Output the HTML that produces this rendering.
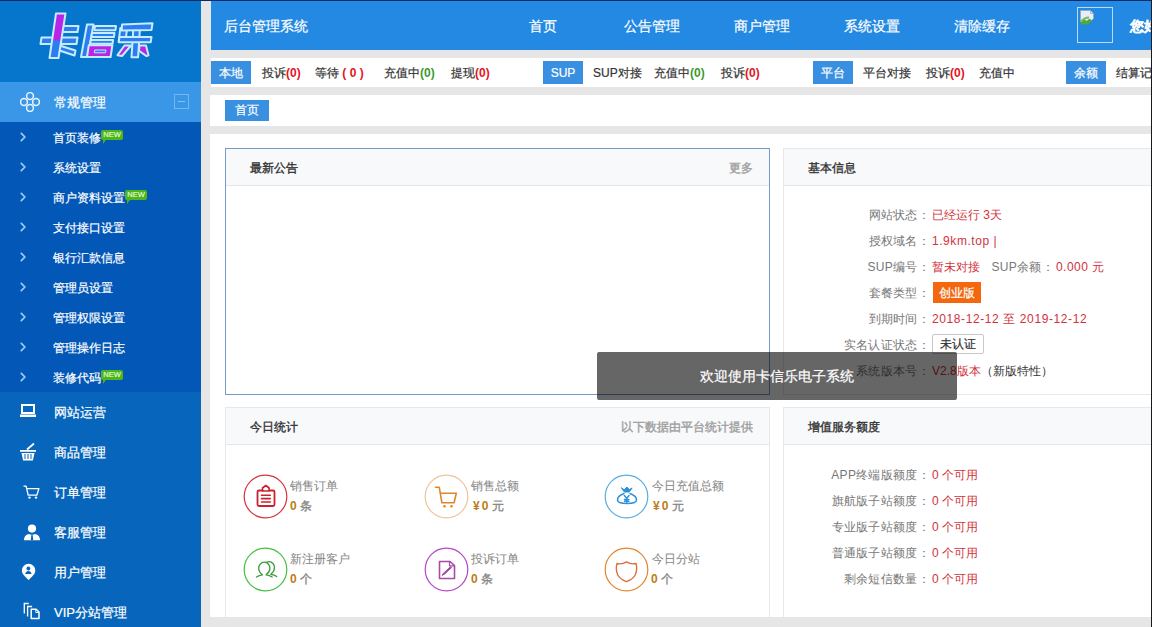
<!DOCTYPE html>
<html><head><meta charset="utf-8">
<style>
*{box-sizing:border-box;margin:0;padding:0;white-space:nowrap}
html,body{-webkit-text-stroke-width:0.2px;width:1152px;height:627px;overflow:hidden;background:#e6e6e6;font-family:"Liberation Sans",sans-serif;}
.a{position:absolute;white-space:nowrap}
#side{position:absolute;left:0;top:0;width:201px;height:627px;background:#0766bb}
#logo{position:absolute;left:0;top:0;width:201px;height:82px;background:#0675cc}
#act{position:absolute;left:0;top:82px;width:201px;height:40px;background:#3a97e8}
#sub{position:absolute;left:0;top:122px;width:201px;height:270px;background:#0357b7}
.mi{position:absolute;left:54px;color:#fff;font-size:13px;line-height:42px;height:40px}
.si{position:absolute;left:53px;color:#fff;font-size:12px;line-height:32px;height:30px}
.arr{position:absolute;left:20px;width:7px;height:30px}
.new{position:absolute;width:22px;height:10px;background:#4cb61a;color:#f4ffe0;font-size:7.5px;line-height:10px;text-align:center;border-radius:2px;-webkit-text-stroke-width:0.1px}
.new:after{content:"";position:absolute;left:2px;bottom:-4px;border-left:3px solid #4db219;border-right:3px solid transparent;border-bottom:4px solid transparent}
#hdr{position:absolute;left:211px;top:1px;width:940px;height:49px;background:#2489e3}
.nav{position:absolute;top:1px;height:49px;line-height:50px;width:110px;text-align:center;color:#fff;font-size:14px}
#tabs{position:absolute;left:211px;top:58px;width:940px;height:29px;background:#fff}
.lbl{position:absolute;top:61px;height:23px;width:40px;background:#3a90e0;color:#fff;font-size:12px;line-height:25px;text-align:center}
.ti{position:absolute;top:61px;height:23px;line-height:25px;font-size:12px;color:#333}
.r{color:#e5141d;font-weight:bold;-webkit-text-stroke-width:0}
.g{color:#3c9a2d;font-weight:bold;-webkit-text-stroke-width:0}
#crumb{position:absolute;left:210px;top:95px;width:941px;height:31px;background:#fff}
#main{position:absolute;left:210px;top:134px;width:941px;height:483px;background:#fff}
.card{position:absolute;border:1px solid #e8e8e8;background:#fff}
.ch{position:absolute;left:0;top:0;right:0;height:37px;background:#f8f9fb;border-bottom:1px solid #e6e6e6}
.ct{position:absolute;left:24px;top:0;line-height:39px;font-size:12px;color:#333;-webkit-text-stroke-width:0.35px}
.cm{position:absolute;right:16px;top:0;line-height:39px;font-size:12px;color:#a0a0a0;-webkit-text-stroke-width:0.4px}
.lab{position:absolute;width:199px;text-align:right;font-size:12px;color:#777;line-height:28px;height:26px;letter-spacing:0.3px;-webkit-text-stroke-width:0}
.val{position:absolute;font-size:12px;color:#d2323c;line-height:28px;height:26px;-webkit-text-stroke-width:0}
.circ{position:absolute;width:44px;height:44px;border-radius:50%;border:1px solid}
.st{position:absolute;font-size:12px;color:#888;line-height:16px;-webkit-text-stroke-width:0.05px}
.sv{position:absolute;font-size:12px;color:#888;line-height:16px;-webkit-text-stroke-width:0.35px}
.sv b{color:#bd7b20;font-weight:bold;-webkit-text-stroke-width:0}
#toast{position:absolute;left:597px;top:352px;width:360px;height:48px;background:rgba(0,0,0,0.6);border-radius:2px;color:#fff;font-size:14px;line-height:48px;text-align:center}
</style></head><body>
<div id="side">
 <div id="logo">
  <svg class="a" style="left:0;top:0" width="201" height="82" viewBox="0 0 201 82">
   <defs>
    <linearGradient id="kg" gradientUnits="userSpaceOnUse" x1="0" y1="13" x2="0" y2="58"><stop offset="0.6" stop-color="#b824e8"/><stop offset="0.62" stop-color="#2c7ef0"/></linearGradient>
    <g id="L">
    <path d="M60 26h18.5l-1 6H59z"/>
    <path d="M41.5 37.5h36l-1 6.5h-36z"/>
    <path d="M59.5 45.5l16 5-1 5-16.5-5.5z"/>
    <path d="M56 13.5h9.5l-7 44.5h-9z" fill="url(#kg)"/>
    <path d="M87 24.5h6.5l-6 32.5H81z"/>
    <path d="M95 26h21l-.6 4.2h-21z"/>
    <path d="M92 33h22.5l-.6 4h-22.5z"/>
    <path d="M90.8 40h22.3l-.6 3.8H90.2z"/>
    <path d="M88.8 45.2h23.6l-1.8 11.8H87z" fill="#b824e8"/>
    <path d="M120.3 28h6.8l-1.6 13.5h-6.8z"/>
    <path d="M133.3 29h6.6l-1.8 28.3h-6.6z"/>
    <path d="M122 24.5l30.5-1.2-1 6.6-29.8.6z"/>
    <path d="M119.5 37h32l-.8 5.2h-32z"/>
    <path d="M124.5 45.5h6.5l-9 10.5-4.5-.8z" fill="#b824e8"/>
    <path d="M139.5 45.5h6.5l2.5 9.8-2 .8-7.5-5.3z" fill="#b824e8"/>
    </g>
   </defs>
   <use href="#L" fill="#2c7ef0" stroke="#c6ecff" stroke-width="2" stroke-linejoin="round"/>
   <path d="M94.8 50h11.2l-.5 2.8H94.3z" fill="#2c7ef0" stroke="#c6ecff" stroke-width="1"/>
  </svg>
 </div>
 <div id="act">
  <svg class="a" style="left:20px;top:10px" width="20" height="20" viewBox="0 0 20 20" fill="none" stroke="#eaf4ff" stroke-width="1.5">
   <circle cx="10" cy="4" r="3.4"/><circle cx="10" cy="16" r="3.4"/><circle cx="4" cy="10" r="3.4"/><circle cx="16" cy="10" r="3.4"/>
  </svg>
  <div class="mi" style="top:0">常规管理</div>
  <div class="a" style="left:174px;top:12px;width:15px;height:15px;border:1px solid rgba(255,255,255,0.3)"><div class="a" style="left:3px;top:6px;width:7px;height:1px;background:rgba(255,255,255,0.4)"></div></div>
 </div>
 <div id="sub">
  <svg class="a" style="left:0;top:0" width="30" height="270" fill="none" stroke="#9dcbf3" stroke-width="1.7" stroke-linecap="round" stroke-linejoin="round"><path d="M21.3 11.3l3.6 3.7-3.6 3.7M21.3 41.3l3.6 3.7-3.6 3.7M21.3 71.3l3.6 3.7-3.6 3.7M21.3 101.3l3.6 3.7-3.6 3.7M21.3 131.3l3.6 3.7-3.6 3.7M21.3 161.3l3.6 3.7-3.6 3.7M21.3 191.3l3.6 3.7-3.6 3.7M21.3 221.3l3.6 3.7-3.6 3.7M21.3 251.3l3.6 3.7-3.6 3.7"/>
  </svg>
  <div class="si" style="top:0">首页装修</div><div class="new" style="left:101px;top:8px">NEW</div>
  <div class="si" style="top:30px">系统设置</div>
  <div class="si" style="top:60px">商户资料设置</div><div class="new" style="left:125px;top:68px">NEW</div>
  <div class="si" style="top:90px">支付接口设置</div>
  <div class="si" style="top:120px">银行汇款信息</div>
  <div class="si" style="top:150px">管理员设置</div>
  <div class="si" style="top:180px">管理权限设置</div>
  <div class="si" style="top:210px">管理操作日志</div>
  <div class="si" style="top:240px">装修代码</div><div class="new" style="left:101px;top:248px">NEW</div>
 </div>
 <div class="mi" style="top:392px">网站运营</div>
 <div class="mi" style="top:432px">商品管理</div>
 <div class="mi" style="top:472px">订单管理</div>
 <div class="mi" style="top:512px">客服管理</div>
 <div class="mi" style="top:552px">用户管理</div>
 <div class="mi" style="top:592px">VIP分站管理</div>
 <svg class="a" style="left:0;top:392px" width="50" height="240" fill="#fff">
  <!-- laptop -->
  <path d="M22 13h12v8H22z" fill="none" stroke="#fff" stroke-width="2"/>
  <path d="M20 22.5h16v2.5H20z"/>
  <!-- basket -->
  <path d="M20 58h16v1.8H20z"/>
  <path d="M21.5 61h13l-1.6 7.5h-9.8z"/>
  <path d="M27 57.5l7-6" stroke="#fff" stroke-width="1.8"/>
  <path d="M25 62v5M28 62v5M31 62v5" stroke="#0766bb" stroke-width="1"/>
  <!-- cart -->
  <path d="M23.5 94.2h2.6l2.1 9h8.6l2.1-6.6H26.9" fill="none" stroke="#fff" stroke-width="1.3" stroke-linejoin="round"/>
  <circle cx="29.5" cy="105.6" r="1.2"/><circle cx="36" cy="105.6" r="1.2"/>
  <!-- person -->
  <circle cx="32" cy="136.6" r="4.1"/>
  <path d="M23.8 148.3c0.3-3.5 1.8-5.8 5-6.3l3.2 1 3.2-1c3.2 0.5 4.7 2.8 5 6.3z"/>
  <path d="M31.3 143.2h1.4l0.5 4.6-1.2 0.6-1.2-0.6z" fill="#0766bb"/>
  <!-- user pin -->
  <path d="M28.6 171.8a6.7 6.7 0 0 1 6.7 6.7c0 3.8-3.8 6.5-6.7 9.6-2.9-3.1-6.7-5.8-6.7-9.6a6.7 6.7 0 0 1 6.7-6.7z"/>
  <circle cx="28.4" cy="176.5" r="1.9" fill="#0766bb"/>
  <path d="M25.2 182c0.4-2 1.6-3 3.2-3s2.8 1 3.2 3z" fill="#0766bb"/>
  <!-- vip copy -->
  <path d="M24.3 221.5v-10h4.5" fill="none" stroke="#fff" stroke-width="1.3"/>
  <path d="M27.6 224.5v-10h4.5" fill="none" stroke="#fff" stroke-width="1.3"/>
  <path d="M31.2 217.2h5l2.8 2.8v6.5h-7.8z" fill="none" stroke="#fff" stroke-width="1.5" stroke-linejoin="round"/>
  <path d="M35.8 217.5v3h3" fill="none" stroke="#fff" stroke-width="1"/>
 </svg>

</div>
<div class="a" style="left:0;top:0;width:1152px;height:1px;background:#0b2a66"></div>
<div id="hdr"></div>
<div class="a" style="left:224px;top:1px;line-height:50px;color:#fff;font-size:14px">后台管理系统</div>
<div class="nav" style="left:488px">首页</div>
<div class="nav" style="left:597px">公告管理</div>
<div class="nav" style="left:707px">商户管理</div>
<div class="nav" style="left:817px">系统设置</div>
<div class="nav" style="left:927px">清除缓存</div>
<div class="a" style="left:1077px;top:7px;width:36px;height:36px;border:1px solid #b9dbf8"></div>
<svg class="a" style="left:1079px;top:9px" width="18" height="18" viewBox="0 0 18 18">
 <path d="M1.5 1.5h10l3 3v5l-2 2-2-1.5-3 2-3-1.5-3 2z" fill="#e8eef6" stroke="#9aa6b8" stroke-width="0.8"/>
 <path d="M11.5 1.5v3h3" fill="none" stroke="#9aa6b8" stroke-width="0.8"/>
 <path d="M2 12.5l3-1.8 3 1.6 3-2 2 1.5 2-2v0.5L9 15.5H2z" fill="#4fa83a"/>
 <path d="M2 13c2-3 5-4.5 8-4.5" fill="none" stroke="#6cbf50" stroke-width="2"/>
</svg>
<div class="a" style="left:1130px;top:1px;line-height:50px;color:#fff;font-size:14px;font-weight:bold">您好</div>

<div id="tabs"></div>
<div class="lbl" style="left:211px">本地</div>
<div class="ti" style="left:262px">投诉<span class="r">(0)</span></div>
<div class="ti" style="left:315px">等待 <span class="r">( 0 )</span></div>
<div class="ti" style="left:384px">充值中<span class="g">(0)</span></div>
<div class="ti" style="left:451px">提现<span class="r">(0)</span></div>
<div class="lbl" style="left:543px">SUP</div>
<div class="ti" style="left:593px">SUP对接</div>
<div class="ti" style="left:654px">充值中<span class="g">(0)</span></div>
<div class="ti" style="left:721px">投诉<span class="r">(0)</span></div>
<div class="lbl" style="left:813px">平台</div>
<div class="ti" style="left:863px">平台对接</div>
<div class="ti" style="left:926px">投诉<span class="r">(0)</span></div>
<div class="ti" style="left:979px">充值中</div>
<div class="lbl" style="left:1066px">余额</div>
<div class="ti" style="left:1116px">结算记录</div>

<div id="crumb"></div>
<div class="a" style="left:225px;top:100px;width:44px;height:21px;background:#3a90e0;color:#fff;font-size:12px;line-height:21px;text-align:center">首页</div>

<div id="main"></div>
<div class="card" style="left:225px;top:148px;width:545px;height:247px;border-color:#7699cc">
 <div class="ch"><div class="ct">最新公告</div><div class="cm">更多</div></div>
</div>
<div class="card" style="left:783px;top:148px;width:400px;height:247px">
 <div class="ch"><div class="ct">基本信息</div></div>
</div>
<div class="lab" style="left:731px;top:201px">网站状态：</div><div class="val" style="left:932px;top:201px">已经运行 3天</div>
<div class="lab" style="left:731px;top:227px">授权域名：</div><div class="val" style="left:932px;top:227px;letter-spacing:0.55px">1.9km.top |</div>
<div class="lab" style="left:731px;top:253px">SUP编号：</div><div class="val" style="left:932px;top:253px">暂未对接</div>
<div class="lab" style="left:855px;top:253px">SUP余额：</div><div class="val" style="left:1056px;top:253px;letter-spacing:0.45px">0.000 元</div>
<div class="lab" style="left:731px;top:279px">套餐类型：</div>
<div class="a" style="left:933px;top:282px;width:48px;height:21px;background:#f4670e;color:#fff;font-size:12px;line-height:23px;text-align:center">创业版</div>
<div class="lab" style="left:731px;top:305px">到期时间：</div><div class="val" style="left:932px;top:305px;letter-spacing:0.6px">2018-12-12 至 2019-12-12</div>
<div class="lab" style="left:731px;top:331px">实名认证状态：</div>
<div class="a" style="left:932px;top:334px;width:52px;height:20px;border:1px solid #c8c8c8;border-radius:2px;background:#fff;color:#333;font-size:12px;line-height:18px;text-align:center">未认证</div>
<div class="lab" style="left:731px;top:357px">系统版本号：</div><div class="val" style="left:932px;top:357px">V2.8版本<span style="color:#333">（新版特性）</span></div>

<div class="card" style="left:225px;top:407px;width:545px;height:230px">
 <div class="ch"><div class="ct">今日统计</div><div class="cm">以下数据由平台统计提供</div></div>
</div>
<div class="card" style="left:783px;top:407px;width:400px;height:230px">
 <div class="ch"><div class="ct">增值服务额度</div></div>
</div>
<div class="lab" style="left:731px;top:461px">APP终端版额度：</div><div class="val" style="left:932px;top:461px">0 个可用</div>
<div class="lab" style="left:731px;top:487px">旗航版子站额度：</div><div class="val" style="left:932px;top:487px">0 个可用</div>
<div class="lab" style="left:731px;top:513px">专业版子站额度：</div><div class="val" style="left:932px;top:513px">0 个可用</div>
<div class="lab" style="left:731px;top:539px">普通版子站额度：</div><div class="val" style="left:932px;top:539px">0 个可用</div>
<div class="lab" style="left:731px;top:565px">剩余短信数量：</div><div class="val" style="left:932px;top:565px">0 个可用</div>

<div class="st" style="left:290px;top:478px">销售订单</div><div class="sv" style="left:290px;top:498px"><b>0</b> 条</div>
<div class="st" style="left:471px;top:478px">销售总额</div><div class="sv" style="left:473px;top:498px"><b>¥<span style="margin-left:2px">0</span></b> 元</div>
<div class="st" style="left:652px;top:478px">今日充值总额</div><div class="sv" style="left:653px;top:498px"><b>¥<span style="margin-left:2px">0</span></b> 元</div>
<div class="st" style="left:290px;top:551px">新注册客户</div><div class="sv" style="left:290px;top:571px"><b>0</b> 个</div>
<div class="st" style="left:471px;top:551px">投诉订单</div><div class="sv" style="left:471px;top:571px"><b>0</b> 条</div>
<div class="st" style="left:652px;top:551px">今日分站</div><div class="sv" style="left:651px;top:571px"><b>0</b> 个</div>


<svg class="a" style="left:243px;top:474px" width="46" height="46" fill="none" stroke-linecap="round" stroke-linejoin="round">
 <circle cx="22.5" cy="22.5" r="21.3" stroke="#d4343c" stroke-width="1.2"/>
 <path d="M19.5 16.5h-3.5a1.5 1.5 0 0 0-1.5 1.5v12.5a1.5 1.5 0 0 0 1.5 1.5h14a1.5 1.5 0 0 0 1.5-1.5V18a1.5 1.5 0 0 0-1.5-1.5h-3.5" stroke="#c9222c" stroke-width="1.8"/>
 <path d="M19.5 17v-3l3.3-2.5 3.3 2.5v3z" stroke="#c9222c" stroke-width="1.6"/>
 <path d="M18.5 21.3h8.8M18.5 24.6h8.8M18.5 28h8.8" stroke="#c9222c" stroke-width="1.6"/>
</svg>
<svg class="a" style="left:424px;top:474px" width="46" height="46" fill="none" stroke-linecap="round" stroke-linejoin="round">
 <circle cx="22.5" cy="22.5" r="21.3" stroke="#efc39c" stroke-width="1.2"/>
 <path d="M11.5 13.3h3.8l2.6 15.5h12.2l2.2-9.6H17" stroke="#e0862a" stroke-width="1.6"/>
 <circle cx="20.5" cy="32.2" r="1.3" fill="#e0862a"/><circle cx="27.5" cy="32.2" r="1.3" fill="#e0862a"/>
</svg>
<svg class="a" style="left:604px;top:474px" width="46" height="46" fill="none" stroke-linecap="round" stroke-linejoin="round">
 <circle cx="22.5" cy="22.5" r="21.3" stroke="#5aaee0" stroke-width="1.2"/>
 <path d="M17.5 14l2.8 4h5l2.8-4-2.8 1.6-2.4-2.6-2.4 2.6z" fill="#2a90dc" stroke="#2a90dc" stroke-width="1"/>
 <path d="M20 19.5c-4 1.5-6.5 4-6.5 6.5 0 2.5 3 3.5 9.5 3.5s9.5-1 9.5-3.5c0-2.5-2.5-5-6.5-6.5" stroke="#2a8ed8" stroke-width="1.5"/>
 <path d="M20.3 21.5l2.4 2.8 2.4-2.8M22.7 24.3v4M20.5 25.5h4.4M20.5 27.2h4.4" stroke="#2a90dc" stroke-width="1.4"/>
</svg>
<svg class="a" style="left:243px;top:547px" width="46" height="46" fill="none" stroke-linecap="round" stroke-linejoin="round">
 <circle cx="22.5" cy="22.5" r="21.3" stroke="#45c045" stroke-width="1.2"/>
 <path d="M13.5 30c2-1.5 4-2 6-2.2-2-1.6-3.8-3.6-3.8-6.6 0-3.3 2.5-6 5.6-6s5.6 2.7 5.6 6c0 3-1.8 5-3.8 6.6 2 .2 4 .7 6 2.2" stroke="#3c9c3c" stroke-width="1.3"/>
 <path d="M23.5 15.3c.8-.4 1.7-.6 2.6-.6 3.1 0 5.4 2.7 5.4 6 0 3-1.8 5-3.6 6.6 2 .2 4 .8 5.8 2.3" stroke="#3c9c3c" stroke-width="1.3"/>
</svg>
<svg class="a" style="left:424px;top:547px" width="46" height="46" fill="none" stroke-linecap="round" stroke-linejoin="round">
 <circle cx="22.5" cy="22.5" r="21.3" stroke="#b447c8" stroke-width="1.2"/>
 <path d="M15.5 14.5h10.5l4.5 4.2v12.8h-15z" stroke="#a84aa8" stroke-width="1.6"/>
 <path d="M25.5 14.8v4h4.5" stroke="#a84aa8" stroke-width="1.2"/>
 <path d="M18.5 28.2l2-1 7-6.5-1-1-7 6.5z" fill="#a84aa8" stroke="#a84aa8" stroke-width="1"/>
</svg>
<svg class="a" style="left:604px;top:547px" width="46" height="46" fill="none" stroke-linecap="round" stroke-linejoin="round">
 <circle cx="22.5" cy="22.5" r="21.3" stroke="#e2872e" stroke-width="1.2"/>
 <path d="M13 16.5c3 .8 6 .6 9.5-1.6 3.5 2.2 6.5 2.4 9.5 1.6 1.2 4 .8 8-.8 11.5-1.8 3.3-5 5.3-8.7 6.6-3.7-1.3-6.9-3.3-8.7-6.6-1.6-3.5-2-7.5-.8-11.5z" stroke="#dc6e3a" stroke-width="1.4"/>
</svg>
<div id="toast">欢迎使用卡信乐电子系统</div>
<div class="a" style="left:201px;top:617px;width:951px;height:10px;background:#e6e6e6"></div>

<div class="a" style="left:1151px;top:0;width:1px;height:627px;background:#1a1a1a"></div>
</body></html>
